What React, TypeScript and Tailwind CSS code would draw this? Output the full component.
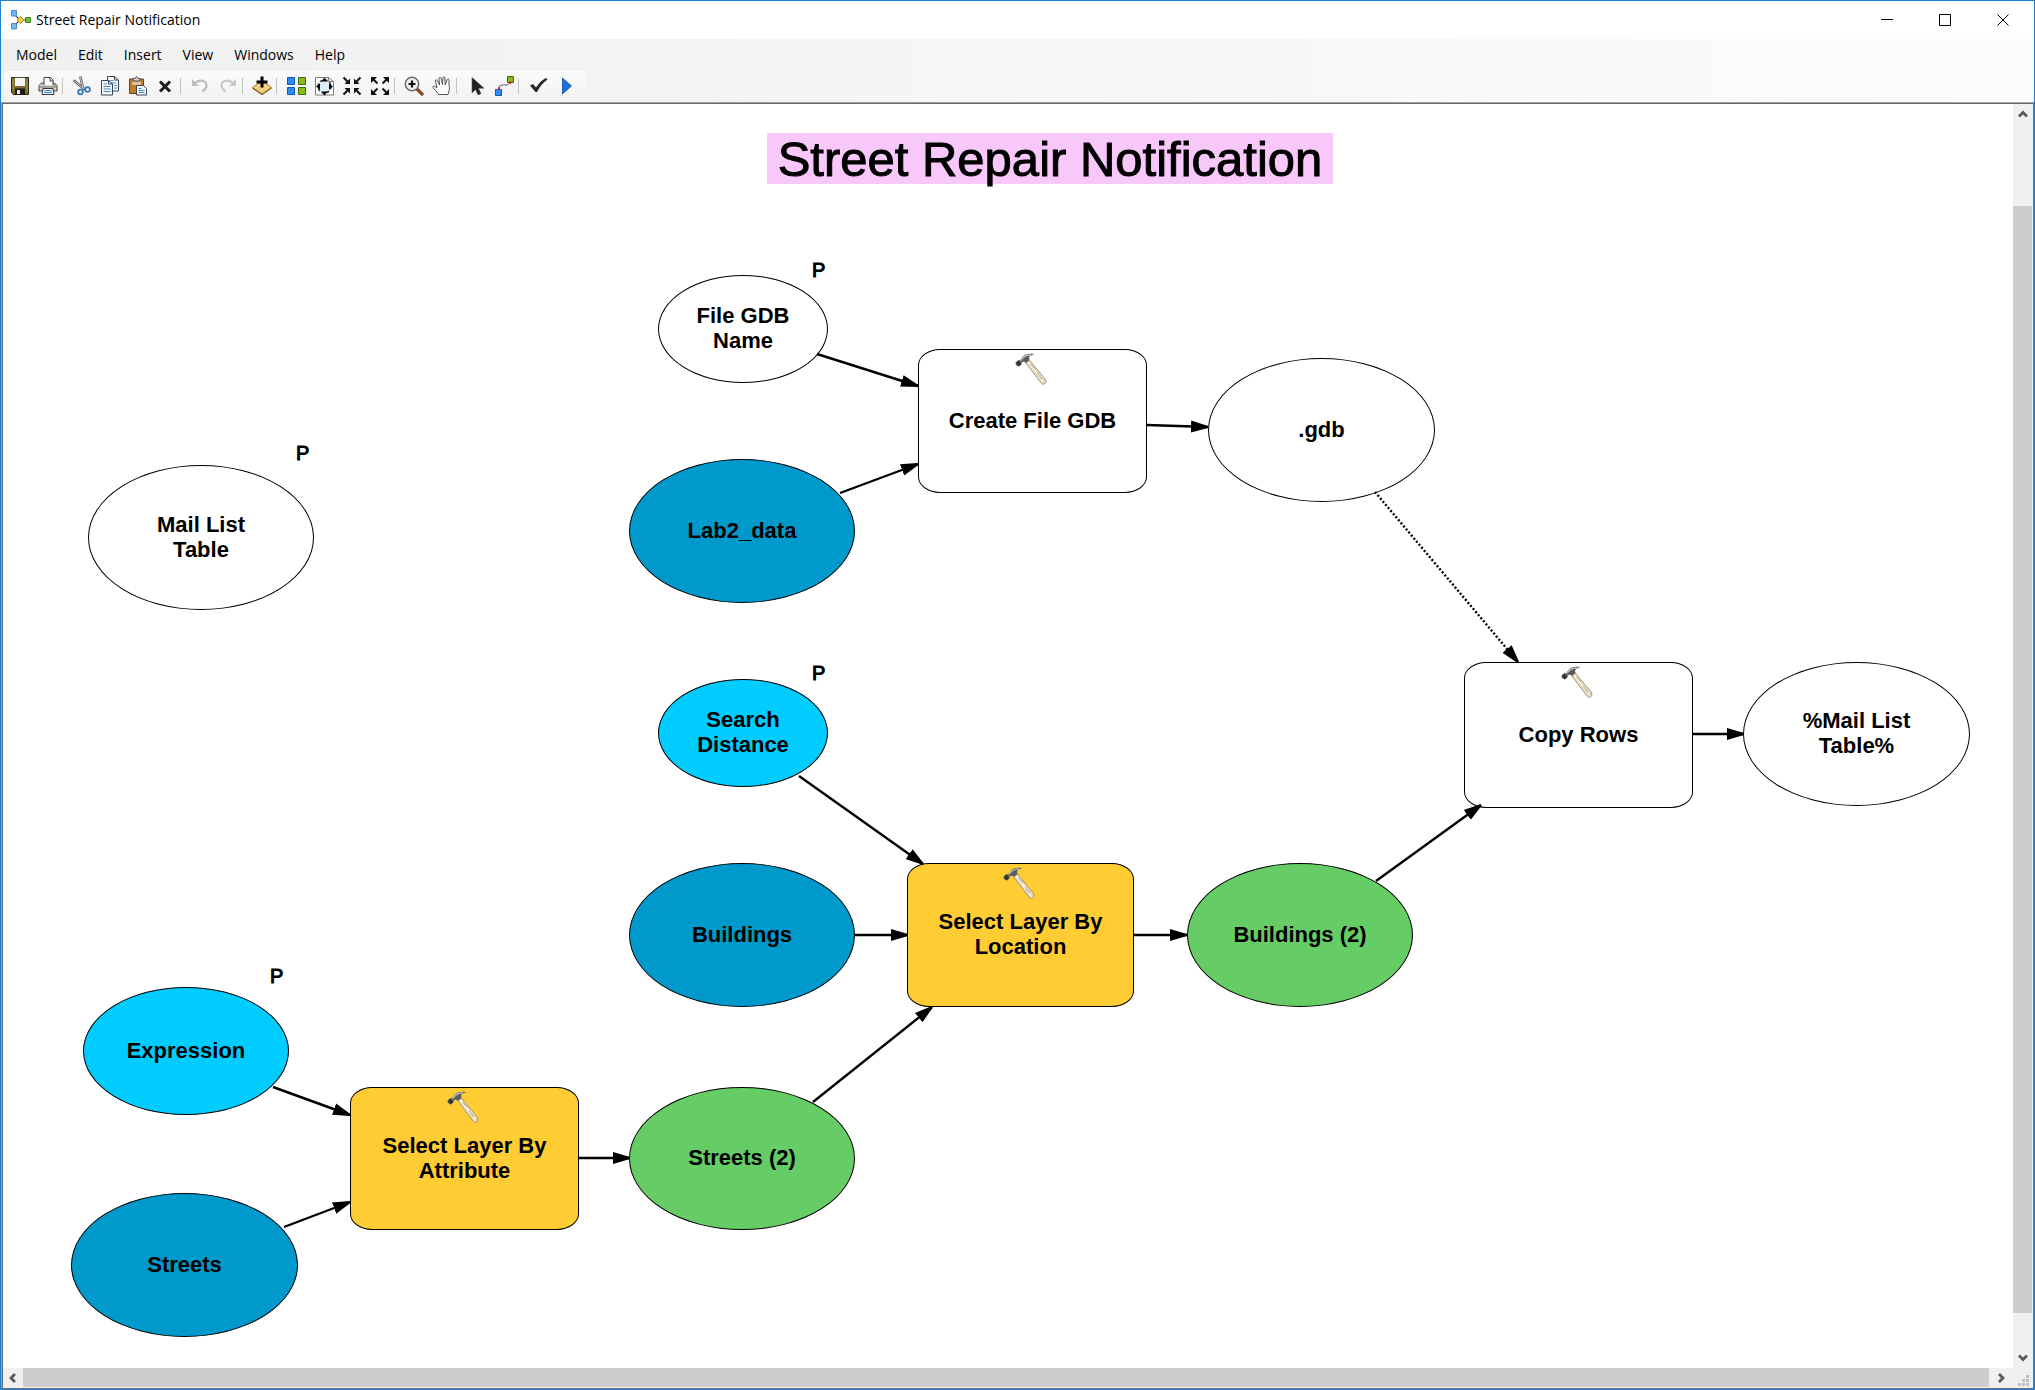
import type { ReactNode } from "react";

/* ---------- toolbar icons, each on a 20 x 20 grid ---------- */

function Icon({ children }: { children: ReactNode }) {
  return (
    <svg viewBox="0 0 20 20" className="size-5" fill="none" aria-hidden="true">
      {children}
    </svg>
  );
}

const SaveIcon = () => (
  <Icon>
    <path d="M1.500 1.500h17v17h-15l-2-2z" fill="#7a6a2e" stroke="#2b2713" />
    <path d="M5 1.800h10v8.200H5z" fill="#f3f3f3" />
    <path d="M3 3v11M17 3v13" stroke="#a8975a" />
    <path d="M5 12.500h10v6H5z" fill="#1d1b14" />
    <path d="M7 14h3v4H7z" fill="#e8e8e8" />
  </Icon>
);
const PrintIcon = () => (
  <Icon>
    <path d="M1 9.500L3.500 7h13L19 9.500v5.500H1z" fill="#d2d0c6" stroke="#45433d" />
    <path d="M6 9V1.500h6.500L15 4v5" fill="#fff" stroke="#3c4650" />
    <path d="M12 1.500V5h3" stroke="#3c4650" />
    <path d="M1.500 11h17" stroke="#77756c" />
    <path d="M15.500 9h2" stroke="#3aa03a" strokeWidth="1.500" />
    <path d="M5 12.500h10l1 6H4z" fill="#e9f3fc" stroke="#2f3a45" />
    <path d="M6.500 14.500h7M6 16.500h8" stroke="#4a84c2" />
  </Icon>
);
const CutIcon = () => (
  <Icon>
    <path d="M8.500 1.500L11 12M2.500 5L12 13" stroke="#606060" strokeWidth="2.600" strokeLinecap="round" />
    <path d="M8.500 1.500L11 12M2.500 5L12 13" stroke="#cfcfcf" strokeWidth="1" strokeLinecap="round" />
    <circle cx="8.500" cy="16" r="2.300" stroke="#3579b5" strokeWidth="1.800" />
    <circle cx="15.500" cy="13.500" r="2.400" stroke="#3579b5" strokeWidth="1.800" />
  </Icon>
);
const CopyIcon = () => (
  <Icon>
    <path d="M7.500.500h7L18.500 4v11h-11z" fill="#f4f9ff" stroke="#3c4650" />
    <path d="M14.500.500V4h4" stroke="#3c4650" />
    <path d="M9.500 4.500h4M9.500 7h7M14 9.500h3M14 12h3" stroke="#5b92c9" />
    <path d="M1.500 4.500h7l4 3.500v11h-11z" fill="#f4f9ff" stroke="#3c4650" />
    <path d="M8.500 4.500V8h4" stroke="#3c4650" />
    <path d="M3.500 8h3.500M3.500 10.500h7M3.500 13h7M3.500 15.500h7" stroke="#4a84c2" />
  </Icon>
);
const PasteIcon = () => (
  <Icon>
    <path d="M1.500 3h14v14.500h-14z" fill="#c07b2c" stroke="#6b4317" />
    <path d="M4 5.500h9V9H4z" fill="#e8c28e" />
    <path d="M5 5V2.500h2L8.500.500 10 2.500h2V5z" fill="#d9d9d9" stroke="#4d4d4d" />
    <path d="M8.500 9.500h7l3 3v6.500h-10z" fill="#f4f9ff" stroke="#3c4650" />
    <path d="M10.500 12.500h3M10.500 14.500h6M10.500 16.500h6" stroke="#4a84c2" />
  </Icon>
);
const DeleteIcon = () => (
  <Icon>
    <path d="M4 5.500l10 10M14 5.500l-10 10" stroke="#1c1c1c" strokeWidth="3" />
  </Icon>
);
const UndoIcon = () => (
  <Icon>
    <path d="M2 3v7h7z" fill="#bdbdbd" />
    <path d="M4.500 7.500C9 3 16.500 4 16.500 9.500c0 3-2 4.500-4 6" stroke="#bdbdbd" strokeWidth="2.200" />
  </Icon>
);
const RedoIcon = () => (
  <Icon>
    <path d="M18 3v7h-7z" fill="#c8c8c8" />
    <path d="M15.500 7.500C11 3 3.500 4 3.500 9.500c0 3 2 4.500 4 6" stroke="#c8c8c8" strokeWidth="2.200" />
  </Icon>
);
const AddDataIcon = () => (
  <Icon>
    <path d="M.5 11.500L10 5l9.500 6.500L10 18z" fill="#f5d183" stroke="#a87b35" />
    <path d="M.5 12L10 18.500l9.500-6.500" stroke="#8c642a" strokeWidth="1.300" />
    <path d="M10 .5v11M4.500 6h11" stroke="#000" strokeWidth="3" />
  </Icon>
);
const AutoLayoutIcon = () => (
  <Icon>
    <path d="M1.500 1.500h7v7h-7zM1.500 11.500h7v7h-7z" fill="#2b8df5" stroke="#1257b0" />
    <path d="M12.500 1.500h7v7h-7zM12.500 11.500h7v7h-7z" fill="#86bd1a" stroke="#3f6b0b" />
  </Icon>
);
const FullExtentIcon = () => (
  <Icon>
    <path d="M1.500 1.500h13l5 4v13.500h-18z" fill="#fdfdfd" stroke="#7d7d7d" />
    <path d="M14.500 1.500v4h5" stroke="#7d7d7d" />
    <circle cx="10.500" cy="10.500" r="6.500" fill="#dceef8" stroke="#333" strokeDasharray="3 2" strokeWidth="1.500" />
    <path d="M10.500 1.500l3 4h-6zM10.500 19.500l3-4h-6zM2 10.500l4-3v6zM19 10.500l-4-3v6z" fill="#000" />
  </Icon>
);
const ZoomInFixedIcon = () => (
  <Icon>
    <path d="M8 2.500v5.500H2.500zM12 2.500v5.500h5.500zM8 17.500v-5.500H2.500zM12 17.500v-5.500h5.500z" fill="#111" />
    <path d="M1.500 1.500l4 4M18.500 1.500l-4 4M1.500 18.500l4-4M18.500 18.500l-4-4" stroke="#111" strokeWidth="2" />
  </Icon>
);
const ZoomOutFixedIcon = () => (
  <Icon>
    <path d="M1 1h6L1 7zM19 1v6l-6-6zM1 19v-6l6 6zM19 19h-6l6-6z" fill="#111" />
    <path d="M3 3l4.500 4.500M17 3l-4.500 4.500M3 17l4.500-4.500M17 17l-4.500-4.500" stroke="#111" strokeWidth="2" />
  </Icon>
);
const MagnifierIcon = () => (
  <Icon>
    <path d="M13 13l5 5" stroke="#8a4a2c" strokeWidth="3.400" strokeLinecap="round" />
    <circle cx="8" cy="8" r="6.700" fill="#eef3f6" stroke="#6d6d6d" strokeWidth="1.500" />
    <path d="M8 4.500v7M4.500 8h7" stroke="#111" strokeWidth="2.200" />
  </Icon>
);
const PanIcon = () => (
  <Icon>
    <path
      d="M6.500 18.500C5 15.500 2.500 13.500 1 11.500c-.5-1 .8-1.800 1.800-1L5 12 3.500 5c-.2-1.300 1.500-1.700 2-.4L7.500 9 7 2.500c0-1.500 1.800-1.500 2.200-.1L10.500 8.500l.5-6.800c.2-1.300 2-1.200 2 .2l.2 7 2-5.200c.5-1.200 2-.8 1.900.5-.3 3-.1 5 .4 7.500-.2 3-1 4.500-1.500 6.800z"
      fill="#fff"
      stroke="#555"
    />
  </Icon>
);
const PointerIcon = () => (
  <Icon>
    <path d="M6 1.500v15.500l3.500-3.500 2.500 5.500 3-1.500-2.600-5.300H18z" fill="#222" stroke="#555" strokeWidth=".6" />
  </Icon>
);
const ConnectIcon = () => (
  <Icon>
    <path d="M5 14v-3.500l3-1.500h5l3-2V4" stroke="#666" />
    <path d="M1.500 13.500h6v6h-6z" fill="#2b8df5" stroke="#1257b0" />
    <path d="M13.500.500h6v6h-6z" fill="#86bd1a" stroke="#3f6b0b" />
    <path d="M3.500 13.500L5 10.500l1.500 3zM15 5.500l1.500 3 1.500-3z" fill="#f01818" />
  </Icon>
);
const CheckIcon = () => (
  <Icon>
    <path d="M2 9.500l3-1.500 3 3.500c3-4.500 6-7.500 10-9.500l1.500 1.500C14.500 7 11.500 11 9 16H7.500z" fill="#262626" />
  </Icon>
);
const RunIcon = () => (
  <Icon>
    <path d="M6.500 2l9 8-9 8z" fill="#1f6fd8" stroke="#0f4fa6" strokeWidth=".8" />
  </Icon>
);

const toolGroups = [
  [
    { name: "Save", icon: SaveIcon },
    { name: "Print", icon: PrintIcon },
  ],
  [
    { name: "Cut", icon: CutIcon },
    { name: "Copy", icon: CopyIcon },
    { name: "Paste", icon: PasteIcon },
    { name: "Delete", icon: DeleteIcon },
  ],
  [
    { name: "Undo", icon: UndoIcon },
    { name: "Redo", icon: RedoIcon },
  ],
  [{ name: "Add Data or Tool", icon: AddDataIcon }],
  [
    { name: "Auto Layout", icon: AutoLayoutIcon },
    { name: "Full Extent", icon: FullExtentIcon },
    { name: "Fixed Zoom In", icon: ZoomInFixedIcon },
    { name: "Fixed Zoom Out", icon: ZoomOutFixedIcon },
  ],
  [
    { name: "Zoom In", icon: MagnifierIcon },
    { name: "Pan", icon: PanIcon },
  ],
  [
    { name: "Select", icon: PointerIcon },
    { name: "Connect", icon: ConnectIcon },
  ],
  [
    { name: "Validate Entire Model", icon: CheckIcon },
    { name: "Run", icon: RunIcon },
  ],
];

/* ---------- model diagram ---------- */

const fills = {
  empty: "bg-white",
  data: "bg-[#0099cc]",
  value: "bg-[#00ccff]",
  tool: "bg-[#ffcc33]",
  derived: "bg-[#66cc66]",
};

type ModelNode = {
  lines: string[];
  shape: "ellipse" | "tool";
  fill: keyof typeof fills;
  x: number;
  y: number;
  w: number;
  h: number;
};

const nodes: ModelNode[] = [
  { lines: ["File GDB", "Name"], shape: "ellipse", fill: "empty", x: 655, y: 171, w: 170, h: 108 },
  { lines: ["Lab2_data"], shape: "ellipse", fill: "data", x: 626, y: 355, w: 226, h: 144 },
  { lines: ["Create File GDB"], shape: "tool", fill: "empty", x: 915, y: 245, w: 229, h: 144 },
  { lines: [".gdb"], shape: "ellipse", fill: "empty", x: 1205, y: 254, w: 227, h: 144 },
  { lines: ["Mail List", "Table"], shape: "ellipse", fill: "empty", x: 85, y: 361, w: 226, h: 145 },
  { lines: ["Copy Rows"], shape: "tool", fill: "empty", x: 1461, y: 558, w: 229, h: 146 },
  { lines: ["%Mail List", "Table%"], shape: "ellipse", fill: "empty", x: 1740, y: 558, w: 227, h: 144 },
  { lines: ["Search", "Distance"], shape: "ellipse", fill: "value", x: 655, y: 575, w: 170, h: 108 },
  { lines: ["Buildings"], shape: "ellipse", fill: "data", x: 626, y: 759, w: 226, h: 144 },
  { lines: ["Select Layer By", "Location"], shape: "tool", fill: "tool", x: 904, y: 759, w: 227, h: 144 },
  { lines: ["Buildings (2)"], shape: "ellipse", fill: "derived", x: 1184, y: 759, w: 226, h: 144 },
  { lines: ["Expression"], shape: "ellipse", fill: "value", x: 80, y: 883, w: 206, h: 128 },
  { lines: ["Select Layer By", "Attribute"], shape: "tool", fill: "tool", x: 347, y: 983, w: 229, h: 143 },
  { lines: ["Streets"], shape: "ellipse", fill: "data", x: 68, y: 1089, w: 227, h: 144 },
  { lines: ["Streets (2)"], shape: "ellipse", fill: "derived", x: 626, y: 983, w: 226, h: 143 },
];

const parameterMarks = [
  { x: 809, y: 154 },
  { x: 293, y: 337 },
  { x: 809, y: 557 },
  { x: 267, y: 860 },
];

const connectors = [
  { from: [814, 250], to: [915, 282] },
  { from: [837, 389], to: [915, 360] },
  { from: [1144, 321], to: [1205, 323] },
  { from: [1372, 388], to: [1515, 558], dotted: true },
  { from: [1690, 630], to: [1741, 630] },
  { from: [796, 672], to: [920, 760] },
  { from: [852, 831], to: [905, 831] },
  { from: [1131, 831], to: [1184, 831] },
  { from: [1373, 777], to: [1478, 701] },
  { from: [810, 998], to: [929, 903] },
  { from: [270, 983], to: [347, 1011] },
  { from: [281, 1123], to: [347, 1098] },
  { from: [576, 1054], to: [627, 1054] },
];

function Hammer() {
  return (
    <svg viewBox="0 0 32 32" className="absolute top-[3px] left-1/2 -ml-[18px] size-8" aria-hidden="true">
      <path d="M10.500 9.500l3.500-3L30.500 26.500l.5 3-2.500 2-2-1z" fill="#ead9bf" stroke="#9a917f" strokeWidth=".9" />
      <path d="M13.500 9.500L28 28.500" stroke="#fff6e4" strokeWidth="1.300" />
      <path d="M15.500 11L20 16M22 20l5 6.500" stroke="#9a8d78" strokeWidth=".8" />
      <path
        d="M.5 9.500l3-2.500 1 .5L8 3.500C10 1 14 .3 19.500 1.300 16.500 1.800 14.500 3 14 5l.5 2-3.500 3-2-1.500-2.500 1 .3 1.500-3 2.500L.8 12z"
        fill="#5c5c5c"
      />
      <path d="M5.500 7.500L9 4C10.500 2.500 13 1.800 16 1.800" stroke="#c4c4c4" strokeWidth="1.200" fill="none" />
      <path d="M1 9.800l2.500-2 2.700 3.400-2.500 2.200z" fill="#333" />
    </svg>
  );
}

function NodeBox({ node }: { node: ModelNode }) {
  return (
    <div
      className={`absolute flex flex-col items-center justify-center border border-black pb-0.5 text-center text-[22px] leading-[25px] font-bold whitespace-nowrap ${
        node.shape === "ellipse" ? "rounded-[50%]" : "rounded-[22px/16px]"
      } ${fills[node.fill]}`}
      style={{ left: node.x, top: node.y, width: node.w, height: node.h }}
    >
      {node.shape === "tool" && <Hammer />}
      {node.lines.map((line) => (
        <span key={line}>{line}</span>
      ))}
    </div>
  );
}

function Canvas() {
  return (
    <main className="relative min-w-0 flex-1 overflow-hidden bg-white font-['Liberation_Sans',Arial,sans-serif] text-black">
      <h1 className="absolute top-[29px] left-[764px] flex h-[51px] w-[566px] items-center justify-center bg-[#f9c8fa] text-[49px] font-normal whitespace-nowrap [-webkit-text-stroke:1px_black]">
        Street Repair Notification
      </h1>
      {nodes.map((node) => (
        <NodeBox key={node.lines.join(" ")} node={node} />
      ))}
      {parameterMarks.map((mark) => (
        <span
          key={`${mark.x}-${mark.y}`}
          className="absolute text-[20px] leading-[25px] [-webkit-text-stroke:1px_black]"
          style={{ left: mark.x, top: mark.y }}
        >
          P
        </span>
      ))}
      <svg className="pointer-events-none absolute inset-0 size-full" aria-hidden="true">
        <defs>
          <marker
            id="arrowhead"
            markerUnits="userSpaceOnUse"
            markerWidth="18"
            markerHeight="14"
            refX="17"
            refY="7"
            orient="auto"
          >
            <path d="M0 1l17 5v2L0 13z" />
          </marker>
        </defs>
        {connectors.map(({ from, to, dotted }) => (
          <line
            key={from.join()}
            x1={from[0]}
            y1={from[1]}
            x2={to[0]}
            y2={to[1]}
            stroke="#000"
            strokeWidth="2.400"
            strokeDasharray={dotted ? "2 2" : undefined}
            markerEnd="url(#arrowhead)"
          />
        ))}
      </svg>
    </main>
  );
}

/* ---------- scroll bars ---------- */

const chevrons = {
  up: "M3 9.500l4-4 4 4",
  down: "M3 4.500l4 4 4-4",
  left: "M9 3L5 7l4 4",
  right: "M5 3l4 4-4 4",
};

function ScrollButton({ direction }: { direction: keyof typeof chevrons }) {
  return (
    <button
      type="button"
      aria-label={`Scroll ${direction}`}
      className="flex size-5 shrink-0 items-center justify-center"
    >
      <svg viewBox="0 0 14 14" className="size-3.5" fill="none" stroke="#5a5a5a" strokeWidth="2.800" aria-hidden="true">
        <path d={chevrons[direction]} />
      </svg>
    </button>
  );
}

/* ---------- window frame ---------- */

function ModelLogo() {
  return (
    <svg viewBox="0 0 20 20" className="size-5" aria-hidden="true">
      <path d="M3 4l6 6-6 6M9 10h7" stroke="#444" strokeWidth="1.200" fill="none" />
      <path d="M.5.500h5v5.500h-5zM.5 13.500h5V19h-5z" fill="#74b6ee" stroke="#4a8ccb" />
      <path d="M6 10l3.500-3.500L13 10l-3.500 3.500z" fill="#f6cf3e" stroke="#b8860b" />
      <path d="M14.500 7.500h5v5h-5z" fill="#6cbf45" stroke="#3d8a24" />
    </svg>
  );
}

const windowButtons = [
  { name: "Minimize", path: "M0 5.500h12" },
  { name: "Maximize", path: "M.5.500h11v11H.5z" },
  { name: "Close", path: "M.5.500l11 11M11.500.500l-11 11" },
];

const menus = ["Model", "Edit", "Insert", "View", "Windows", "Help"];

export default function App() {
  return (
    <div className="flex h-screen flex-col border border-[#1a7fd4] bg-white font-['Open_Sans','Noto_Sans',sans-serif] text-sm text-black">
      <header className="flex h-[38px] shrink-0 items-center pr-0.5">
        <div className="flex flex-1 items-center gap-[5px] pl-2.5">
          <ModelLogo />
          <span>Street Repair Notification</span>
        </div>
        {windowButtons.map((button) => (
          <button
            key={button.name}
            type="button"
            aria-label={button.name}
            className="flex h-full w-[58px] items-center justify-center"
          >
            <svg viewBox="0 0 12 12" className="size-3" fill="none" stroke="#000" aria-hidden="true">
              <path d={button.path} />
            </svg>
          </button>
        ))}
      </header>

      <div className="shrink-0 bg-linear-to-r from-[#f0f0f0] to-[#fcfcfc]">
        <nav className="flex h-8 items-center gap-px pl-[5px]">
          {menus.map((menu) => (
            <button key={menu} type="button" className="px-2.5">
              {menu}
            </button>
          ))}
        </nav>
        <div className="flex pl-[3px]">
          <div
            role="toolbar"
            aria-label="Standard"
            className="flex h-[31px] items-center rounded bg-linear-to-b from-[#fbfbfb] to-[#f1f1f1] pr-1.5 pb-px pl-0.5"
          >
            {toolGroups.map((group, index) => (
              <div key={group[0].name} className="flex items-center">
                {index > 0 && <div className="mr-[5px] h-4 w-px bg-[#c4c4c4]" />}
                {group.map(({ name, icon: ToolIcon }) => (
                  <button
                    key={name}
                    type="button"
                    aria-label={name}
                    className="flex h-6 w-7 items-center justify-center"
                  >
                    <ToolIcon />
                  </button>
                ))}
              </div>
            ))}
          </div>
        </div>
      </div>

      <div className="flex min-h-0 flex-1 flex-col border border-[#a0a0a0] border-r-[#6f6f6f] border-b-[#6f6f6f]">
        <div className="flex min-h-0 flex-1 flex-col border-t border-l border-[#696969]">
          <div className="flex min-h-0 flex-1">
            <Canvas />
            <div className="flex w-5 flex-col bg-[#f0f0f0]">
              <ScrollButton direction="up" />
              <div className="mt-[82px] mb-[35px] w-[19px] flex-1 bg-[#cdcdcd]" />
              <ScrollButton direction="down" />
            </div>
          </div>
          <div className="flex h-5 shrink-0 items-start bg-[#f0f0f0]">
            <ScrollButton direction="left" />
            <div className="mr-0.5 h-[19px] flex-1 bg-[#cdcdcd]" />
            <ScrollButton direction="right" />
            <svg viewBox="0 0 20 20" className="ml-0.5 size-5" fill="#bfbfbf" aria-hidden="true">
              <path d="M13 7h3v3h-3zM9 11h3v3H9zM13 11h3v3h-3zM5 15h3v3H5zM9 15h3v3H9zM13 15h3v3h-3z" />
            </svg>
          </div>
        </div>
      </div>
    </div>
  );
}
